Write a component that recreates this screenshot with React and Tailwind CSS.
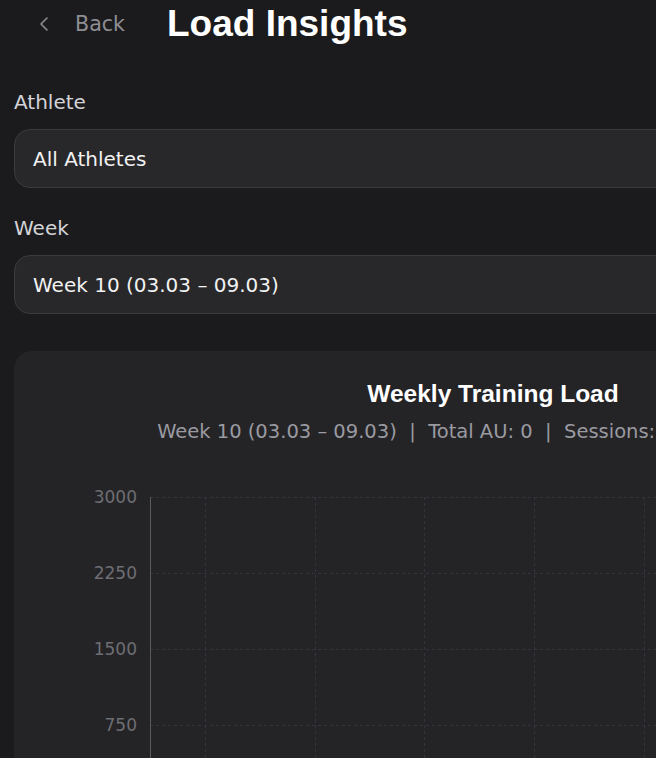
import React from "react";

function Chart() {
  const gridY = [27, 103, 179, 255, 331];
  const labels = ["3000", "2250", "1500", "750", "0"];
  const axisX = 112;
  const band = 109.7;
  const plotRight = axisX + band * 7;
  const vx = Array.from({ length: 7 }, (_, i) => axisX + band / 2 + i * band);
  const days = ["Mon", "Tue", "Wed", "Thu", "Fri", "Sat", "Sun"];
  return (
    <svg width="910" height="380" className="block mt-[24px]">
      {gridY.slice(0, 4).map((y) => (
        <line key={y} x1={axisX} x2={plotRight} y1={y + 0.5} y2={y + 0.5} stroke="#34343c" strokeDasharray="3 3" />
      ))}
      {vx.map((x) => (
        <line key={x} x1={Math.round(x) + 0.5} x2={Math.round(x) + 0.5} y1={27} y2={331} stroke="#34343c" strokeDasharray="3 3" />
      ))}
      <line x1={axisX + 0.5} x2={axisX + 0.5} y1={27} y2={331} stroke="#5a5a5e" />
      <line x1={axisX} x2={plotRight} y1={331.5} y2={331.5} stroke="#5a5a5e" />
      {labels.map((l, i) => (
        <text
          key={l}
          x={99}
          y={gridY[i] + 6.3}
          textAnchor="end"
          fill="#6e6e73"
          fontSize="17"
          className="font-['DejaVu_Sans',sans-serif]"
        >
          {l}
        </text>
      ))}
      {days.map((d, i) => (
        <text
          key={d}
          x={vx[i]}
          y={356}
          textAnchor="middle"
          fill="#6e6e73"
          fontSize="17"
          className="font-['DejaVu_Sans',sans-serif]"
        >
          {d}
        </text>
      ))}
    </svg>
  );
}

export default function App() {
  return (
    <div className="w-[656px] h-[758px] overflow-hidden bg-[#1b1b1e] font-['DejaVu_Sans','Liberation_Sans',sans-serif]">
      <div className="w-[986px] px-[14px]">
        <header className="flex items-center h-[48px]">
          <button className="flex items-center pl-[18px] h-[48px] text-[#8e8e93]">
            <svg width="24" height="24" viewBox="0 0 24 24" fill="none" stroke="#8e8e93" strokeWidth="1.6" strokeLinecap="round" strokeLinejoin="round">
              <path d="m15 18-6-6 6-6" />
            </svg>
            <span className="ml-[19px] text-[20.6px] leading-[48px]">Back</span>
          </button>
          <h1 className="ml-[42px] text-[37px] leading-[48px] font-bold text-white font-['Liberation_Sans',Arial,sans-serif]">
            Load Insights
          </h1>
        </header>

        <div className="mt-[40px] text-[20px] leading-[28px] text-[#d4d4d8]">Athlete</div>
        <div className="mt-[13px] h-[59px] flex items-center px-[18px] rounded-2xl bg-[#28282b] border border-[#3b3b3f] text-[20px] leading-[28px] text-[#f2f2f2]">
          All Athletes
        </div>

        <div className="mt-[26px] text-[20px] leading-[28px] text-[#d4d4d8]">Week</div>
        <div className="mt-[13px] h-[59px] flex items-center px-[18px] rounded-2xl bg-[#28282b] border border-[#3b3b3f] text-[20px] leading-[28px] text-[#f2f2f2]">
          Week 10 (03.03 – 09.03)
        </div>

        <section className="mt-[37px] rounded-[18px] bg-[#242427] px-6 pt-[27px] pb-6">
          <h2 className="text-center text-[24.5px] leading-[32px] font-bold text-white font-['Liberation_Sans',Arial,sans-serif]">
            Weekly Training Load
          </h2>
          <p className="mt-[8px] text-center text-[19.5px] leading-[28px] text-[#9a9aa0] whitespace-pre">
            {"Week 10 (03.03 – 09.03)  |  Total AU: 0  |  Sessions: 0  |  Avg RPE: 0.0"}
          </p>
          <Chart />
        </section>
      </div>
    </div>
  );
}
